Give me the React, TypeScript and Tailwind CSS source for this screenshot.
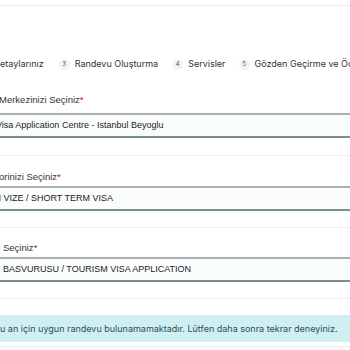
import React from "react";

// text whose start is scrolled off the left edge: the hidden part overflows to the left
const Clip = ({
  hidden,
  children,
  className = "",
}: {
  hidden?: React.ReactNode;
  children: React.ReactNode;
  className?: string;
}) => (
  <div className={`flex items-center whitespace-pre ${className}`}>
    <div className="flex w-0 shrink-0 justify-end">
      <div className="flex shrink-0 items-center">{hidden}</div>
    </div>
    <div className="flex items-center">{children}</div>
  </div>
);

const StepNo = ({ n }: { n: number }) => (
  <span className="flex h-[11px] w-[11px] shrink-0 items-center justify-center rounded-full bg-[#f3f3f3] text-[6px] leading-none text-[#555]">
    {n}
  </span>
);

const Label = ({
  hidden,
  text,
  className = "",
}: {
  hidden: string;
  text: string;
  className?: string;
}) => (
  <Clip
    hidden={hidden}
    className={`h-[12px] font-['Liberation_Sans',Arial,sans-serif] text-[9.5px] leading-[12px] text-[#333] ${className}`}
  >
    {text}
    <span className="text-[#c8102e]">*</span>
  </Clip>
);

const Field = ({
  hidden,
  text,
  textClass = "",
  className = "",
}: {
  hidden: string;
  text: string;
  textClass?: string;
  className?: string;
}) => (
  <div
    className={`flex h-[25px] items-center border-t-2 border-b-2 border-t-[#aab1b5] border-b-[#7b8e98] bg-[#fbfdfd] ${className}`}
  >
    <Clip
      hidden={hidden}
      className={`font-['Liberation_Sans',Arial,sans-serif] text-[9px] text-[#222] ${textClass}`}
    >
      {text}
    </Clip>
  </div>
);

const Sep = ({ className = "" }: { className?: string }) => (
  <div className={`h-px bg-[#f0f0f0] ${className}`} />
);

export default function App() {
  return (
    <div className="h-[350px] w-[350px] overflow-hidden bg-white">
      <div className="h-[5px]" />
      <div className="h-px bg-[#ebebeb]" />

      {/* stepper */}
      <div className="mt-[51px] flex h-[14px] items-center whitespace-nowrap font-['Inter',sans-serif] text-[9px] text-[#333]">
        <Clip
          hidden={
            <>
              <StepNo n={1} />
              <span className="ml-[5px]">Başvuru Bilgileri</span>
              <span className="ml-[14px]" />
              <StepNo n={2} />
              <span className="ml-[5px]">D</span>
            </>
          }
        >
          etaylarınız
        </Clip>
        <div className="ml-[15px] flex items-center">
          <StepNo n={3} />
          <span className="ml-[5px]">Randevu Oluşturma</span>
        </div>
        <div className="ml-[14px] flex items-center">
          <StepNo n={4} />
          <span className="ml-[5px]">Servisler</span>
        </div>
        <div className="ml-[13px] flex items-center">
          <StepNo n={5} />
          <span className="ml-[5px]">Gözden Geçirme ve Ödeme</span>
        </div>
      </div>

      {/* application centre */}
      <Label hidden="Başvuru " text="Merkezinizi Seçiniz" className="mt-[23px] -ml-px" />
      <Field
        hidden=""
        text="Visa Application Centre - Istanbul Beyoglu"
        textClass="-ml-[4px]"
        className="mt-[7px]"
      />
      <Sep className="mt-[17px]" />

      {/* category */}
      <Label hidden="Randevu Kateg" text="orinizi Seçiniz" className="mt-[15px] -ml-px" />
      <Field
        hidden="KISA DÖNEM"
        text=" VIZE / SHORT TERM VISA"
        textClass="ml-px"
        className="mt-[3px]"
      />
      <Sep className="mt-[16px]" />

      {/* sub category */}
      <Label hidden="Alt Kategorinizi " text="Seçiniz" className="mt-[14px] ml-[3px]" />
      <Field
        hidden="TURIZM VIZESI "
        text="BASVURUSU / TOURISM VISA APPLICATION"
        textClass="ml-[3px]"
        className="mt-[3px]"
      />
      <Sep className="mt-[16px]" />

      {/* info alert */}
      <div className="mt-[16px] flex h-[27px] items-center bg-[#d0eff3] font-['Inter',sans-serif] text-[9px] text-[#2a4f58]">
        <Clip hidden="Ş">
          u an için uygun randevu bulunamamaktadır. Lütfen daha sonra tekrar deneyiniz.
        </Clip>
      </div>
      <Sep className="mt-[4px]" />
    </div>
  );
}
